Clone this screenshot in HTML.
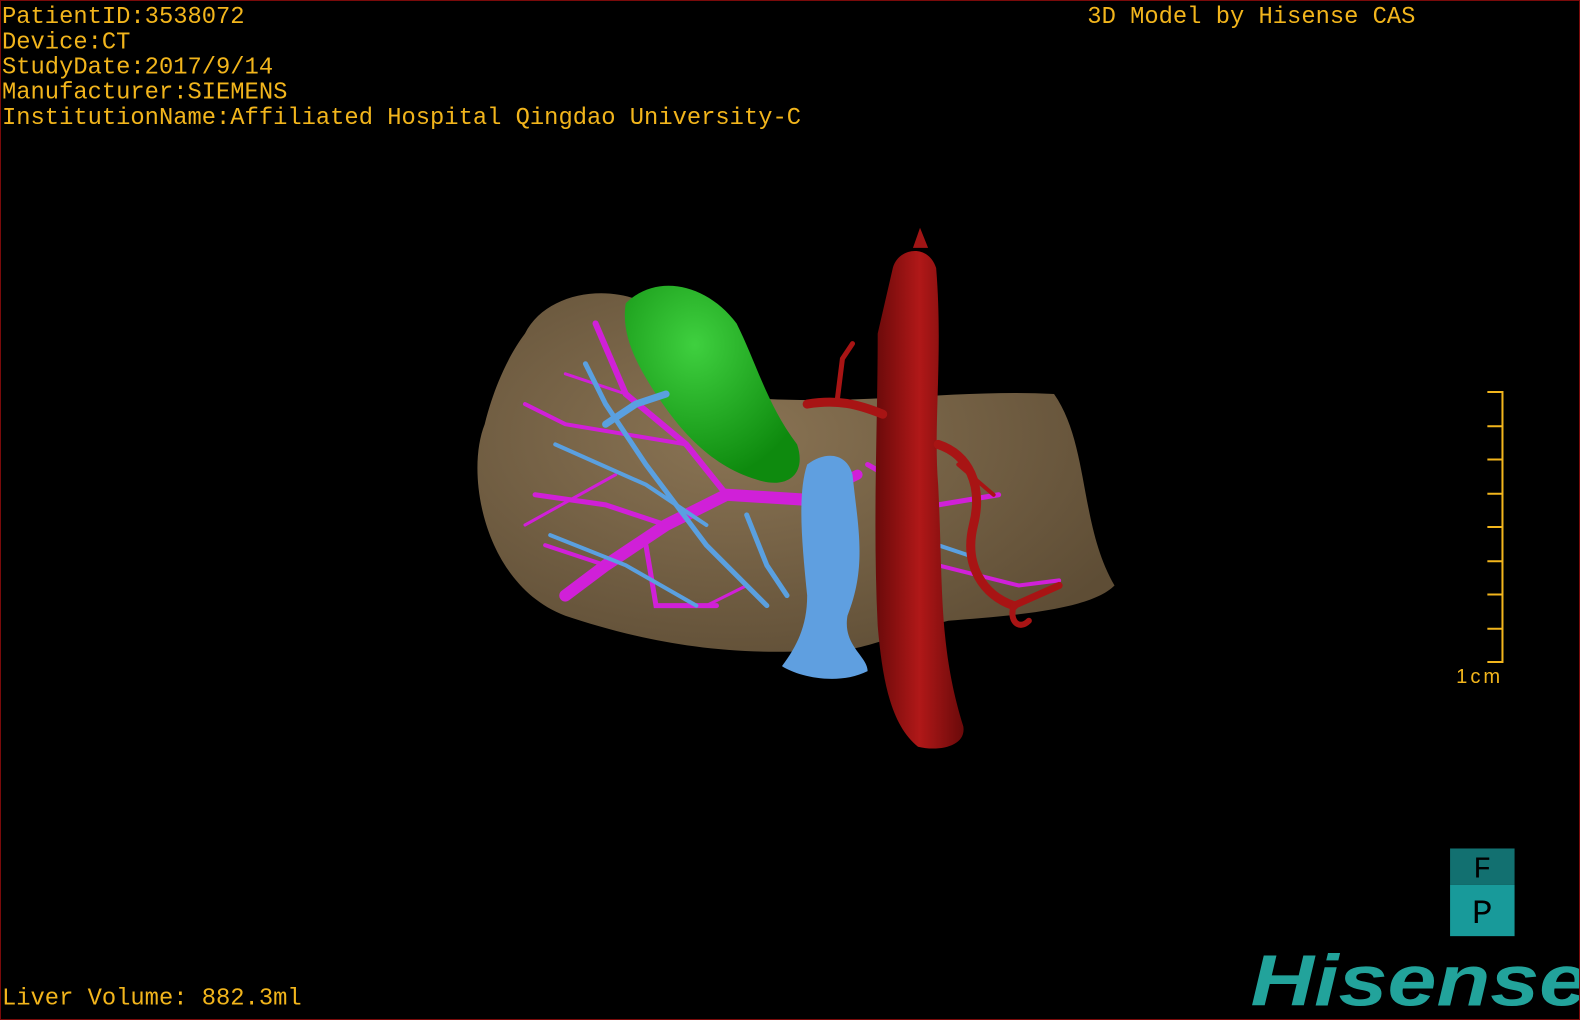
<!DOCTYPE html>
<html><head><meta charset="utf-8"><style>
html,body{margin:0;padding:0;background:#000;}
#c{position:relative;width:1580px;height:1020px;background:#000;overflow:hidden;box-sizing:border-box;border:1px solid #7a0a0a;}
#s{position:absolute;left:0;top:0;width:1568px;height:1012px;transform:scale(1.0077);transform-origin:0 0;}
.t{position:absolute;color:#f2b51c;font-family:"Liberation Mono",monospace;font-size:23.6px;line-height:25px;white-space:pre;}
</style></head><body><div id="c"><div id="s">
<div class="t" style="left:1px;top:4px;">PatientID:3538072
Device:CT
StudyDate:2017/9/14
Manufacturer:SIEMENS
InstitutionName:Affiliated Hospital Qingdao University-C</div>
<div class="t" style="left:1078px;top:4px;">3D Model by Hisense CAS</div>
<div class="t" style="left:1px;top:978px;">Liver Volume: 882.3ml</div>
<svg width="1568" height="1012" style="position:absolute;left:0;top:0">
<defs>
<radialGradient id="lv" cx="0.4" cy="0.4" r="0.7"><stop offset="0" stop-color="#8a7454"/><stop offset="1" stop-color="#5e4d35"/></radialGradient>
<radialGradient id="gb" cx="0.4" cy="0.3" r="0.7"><stop offset="0" stop-color="#3fd03f"/><stop offset="1" stop-color="#0e8a0e"/></radialGradient>
<linearGradient id="ao" x1="0" x2="1"><stop offset="0" stop-color="#6a0a0a"/><stop offset="0.5" stop-color="#b01818"/><stop offset="1" stop-color="#6a0a0a"/></linearGradient>
</defs>
<path d="M520 330 C540 290 600 280 640 300 L760 395 C860 400 960 385 1045 390 C1080 440 1070 520 1105 580 C1080 605 1000 610 940 615 C880 630 850 650 800 645 C700 650 620 630 560 610 C480 580 460 470 480 420 C490 380 505 350 520 330Z" fill="url(#lv)"/>
<path d="M620 300 C650 270 700 280 730 320 C750 360 760 400 790 440 C800 470 780 485 750 475 C700 460 670 420 650 390 C630 360 615 330 620 300Z" fill="url(#gb)"/>
<g stroke="#d020d8" fill="none" stroke-linecap="round">
<path d="M800 495 L720 490 L660 520 L600 560 L560 590" stroke-width="12"/>
<path d="M720 490 L680 440 L620 390 L590 320" stroke-width="6"/>
<path d="M660 520 L600 500 L530 490" stroke-width="5"/>
<path d="M680 440 L560 420 L520 400" stroke-width="4"/>
<path d="M640 540 L650 600 L710 600" stroke-width="5"/>
<path d="M600 560 L540 540" stroke-width="4"/>
<path d="M620 390 L560 370" stroke-width="3"/>
<path d="M610 470 L520 520" stroke-width="3"/>
<path d="M700 600 L740 580" stroke-width="3"/>
<path d="M860 460 L930 500 L990 490" stroke-width="5"/>
<path d="M930 560 L1010 580 L1050 575" stroke-width="4"/>
<path d="M800 495 L850 470" stroke-width="10"/>
</g>
<g stroke="#5aa0e0" fill="none" stroke-linecap="round">
<path d="M600 420 L630 400 L660 390" stroke-width="7"/>
<path d="M580 360 L600 400 L640 460 L700 540 L760 600" stroke-width="5"/>
<path d="M550 440 L640 480 L700 520" stroke-width="4"/>
<path d="M545 530 L620 560 L690 600" stroke-width="4"/>
<path d="M740 510 L760 560 L780 590" stroke-width="5"/>
<path d="M930 540 L960 550" stroke-width="4"/>
</g>
<path d="M800 460 C820 445 840 450 845 470 C850 520 860 560 840 610 C835 640 860 650 860 665 C830 680 790 670 775 660 C790 640 800 620 800 590 C795 540 790 490 800 460Z" fill="#5f9fe0"/>
<path d="M885 265 C890 245 920 240 928 265 C935 350 925 420 930 480 C935 580 930 640 955 720 C958 740 930 745 910 740 C885 720 875 680 870 620 C865 520 870 420 870 330 Z" fill="url(#ao)"/>
<path d="M905 245 L912 225 L920 245Z" fill="#a01515"/>
<g stroke="#a81414" fill="none" stroke-linecap="round">
<path d="M875 410 C850 400 830 395 800 400" stroke-width="9"/>
<path d="M830 395 L835 355 L845 340" stroke-width="5"/>
<path d="M930 440 C960 450 975 480 965 520 C955 560 975 590 1005 600" stroke-width="9"/>
<path d="M1005 600 L1050 580" stroke-width="7"/>
<path d="M1005 600 C1000 615 1010 625 1020 615" stroke-width="6"/>
<path d="M950 460 L985 490" stroke-width="4"/>
</g>
<g stroke="#f2b51c" stroke-width="2" fill="none">
<path d="M1475 388 H1490 V656 H1475"/>
<path d="M1475 422 H1490 M1475 455 H1490 M1475 489 H1490 M1475 522 H1490 M1475 556 H1490 M1475 589 H1490 M1475 623 H1490"/>
</g>
<text x="1444" y="677" fill="#f2b51c" font-family="Liberation Sans,sans-serif" font-size="20" letter-spacing="3">1cm</text>
<rect x="1438" y="841" width="64" height="36" fill="#127070"/>
<rect x="1438" y="877" width="64" height="51" fill="#189a9a"/>
<text x="1470" y="870" fill="#000" font-family="Liberation Mono,monospace" font-size="30" text-anchor="middle">F</text>
<text x="1470" y="915" fill="#000" font-family="Liberation Mono,monospace" font-size="34" text-anchor="middle">P</text>
<text x="1240" y="997" fill="#22a39b" font-family="Liberation Sans,sans-serif" font-weight="bold" font-style="italic" font-size="72" textLength="335" lengthAdjust="spacingAndGlyphs">Hisense</text>
</svg>
</div></div></body></html>
